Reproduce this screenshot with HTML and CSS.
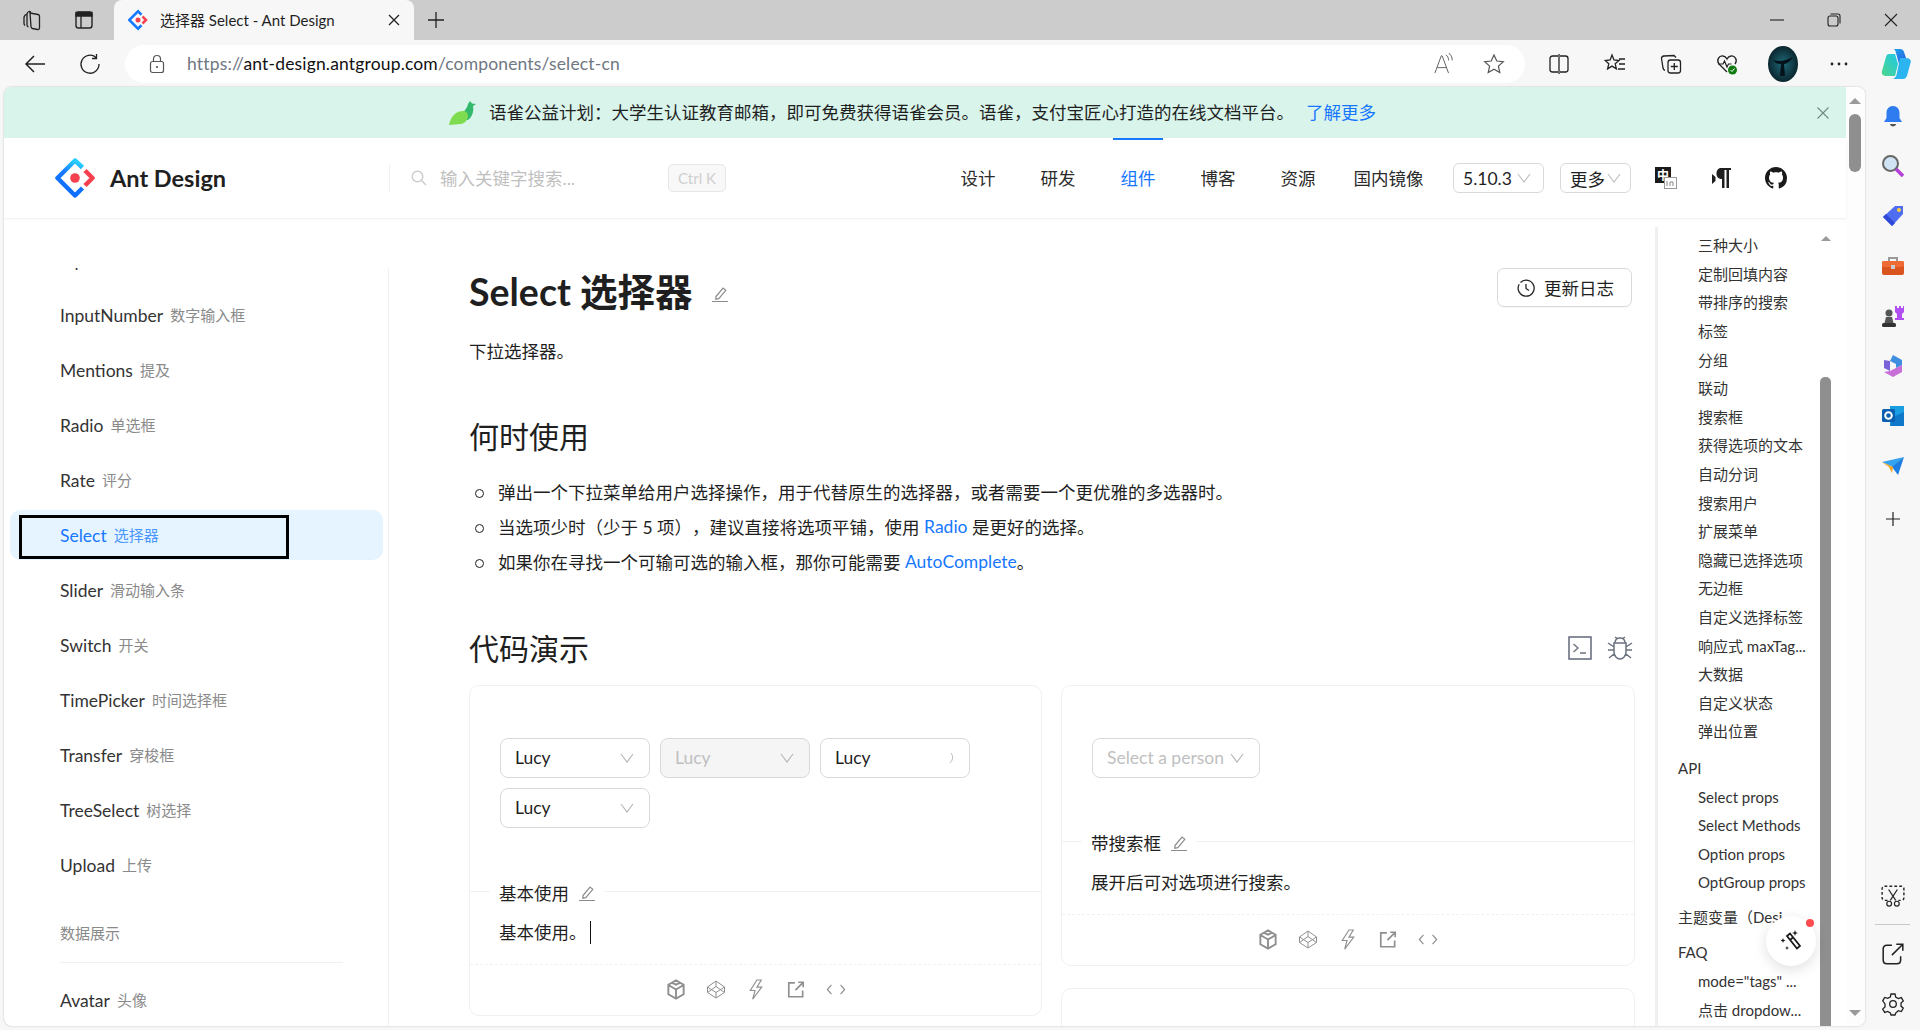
FILE: index.html
```html
<!DOCTYPE html>
<html lang="zh-CN">
<head>
<meta charset="utf-8">
<title>选择器 Select - Ant Design</title>
<link rel="stylesheet" href="styles.css">
</head>
<body>
<svg class="defs" aria-hidden="true">
  <defs>
    <symbol id="chev" viewBox="0 0 14 10"><path d="M1 1l6 8 6-8" fill="none" stroke="currentColor" stroke-width="1.100"/></symbol>
    <symbol id="edit" viewBox="0 0 18 18"><path d="M5 11.500L12 3l2.800 2.400-7 8.200-3 .6zM1 16.500h16" fill="none" stroke="currentColor" stroke-width="1.200"/></symbol>
    <symbol id="csb" viewBox="0 0 20 22"><path d="M10 1.500l8 4.500v10l-8 4.500-8-4.500V6zM2.500 6.500L10 11l7.500-4.500M10 11v9M6 4l4 2 4-2" fill="none" stroke="currentColor" stroke-width="2"/></symbol>
    <symbol id="cpen" viewBox="0 0 20 20"><path d="M10 1.500l8.500 6v5.500L10 18.500 1.500 13V7.500zM10 1.500V7M10 13v5.500M1.500 7.500L10 13l8.500-5.500M1.500 13L10 7l8.500 6" fill="none" stroke="currentColor" stroke-width="1"/></symbol>
    <symbol id="bolt" viewBox="0 0 16 22"><path d="M9 1L2 12h5l-2.500 9L14 8.500H9L13.500 1z" fill="none" stroke="currentColor" stroke-width="1.200"/></symbol>
    <symbol id="ext" viewBox="0 0 18 18"><path d="M8 3H2.500v12.500H15V10M8.500 9.500L15 3M11 2.500h4.500V7" fill="none" stroke="currentColor" stroke-width="1.500"/></symbol>
    <symbol id="code" viewBox="0 0 22 14"><path d="M6 2L1.500 7 6 12M16 2l4.500 5L16 12" fill="none" stroke="currentColor" stroke-width="1.300"/></symbol>
  </defs>
</svg>

<div class="tabstrip">
  <svg class="tb-icon strip-first" viewBox="0 0 22 22"><path d="M9 4l8 1.500c1 .2 1.500 1 1.500 2V19c0 1-1 1.700-2 1.500l-5-1c-1-.2-1.500-1-1.500-2zM10 3L8 2.500C6.500 3 6 4 6 5.500V16c0 1 .5 1.500 1.500 2M6 5C3.500 6 3 7 3 8.500v6c0 1 .5 1.500 1 2" fill="none" stroke="#222" stroke-width="1.300"/></svg>
  <svg class="tb-icon strip-second" viewBox="0 0 22 22"><rect x="3" y="3" width="16" height="16" rx="2.500" fill="none" stroke="#222" stroke-width="1.400"/><path d="M3 3.500h16v3.500H3zM8 7v12" fill="#222" stroke="#222" stroke-width="1.300"/></svg>
  <div class="tab">
    <svg class="tab-fav" viewBox="0 0 40 40"><path d="M27 9.500L20 2.500 2.500 20 20 37.500 27 30.500" fill="none" stroke="#1677ff" stroke-width="5"/><path d="M29 13l7 7-7 7" fill="none" stroke="#f5414f" stroke-width="5"/><ellipse cx="20" cy="20" rx="5" ry="5" fill="#f5414f"/></svg>
    <span class="tab-title">选择器 Select - Ant Design</span>
    <svg class="tab-close" viewBox="0 0 12 12"><path d="M1 1l10 10M11 1L1 11" stroke="#222" stroke-width="1.300"/></svg>
  </div>
  <svg class="tab-new" viewBox="0 0 18 18"><path d="M9 1v16M1 9h16" stroke="#222" stroke-width="1.300"/></svg>
  <div class="win-controls">
    <svg viewBox="0 0 14 14"><path d="M0 7h14" stroke="#222" stroke-width="1.100"/></svg>
    <svg viewBox="0 0 14 14"><rect x="1" y="3" width="10" height="10" rx="2" fill="none" stroke="#222" stroke-width="1.100"/><path d="M3.500 1H11c1.200 0 2 .8 2 2v7.500" fill="none" stroke="#222" stroke-width="1.100"/></svg>
    <svg viewBox="0 0 14 14"><path d="M1 1l12 12M13 1L1 13" stroke="#222" stroke-width="1.100"/></svg>
  </div>
</div>

<div class="toolbar">
  <svg class="tool tool-back" viewBox="0 0 22 22"><path d="M21 11H2M10 3l-8 8 8 8" fill="none" stroke="#222" stroke-width="1.500"/></svg>
  <svg class="tool tool-reload" viewBox="0 0 22 22"><path d="M17 4.500A9 9 0 1 0 20 11M17.500 1v4.500H13" fill="none" stroke="#222" stroke-width="1.300"/></svg>
  <div class="addressbar">
    <svg class="lock" viewBox="0 0 16 20"><rect x="1.500" y="7.500" width="13" height="11" rx="2" fill="none" stroke="#555" stroke-width="1.200"/><path d="M4.500 7.500V5a3.500 3.500 0 0 1 7 0v2.500" fill="none" stroke="#555" stroke-width="1.200"/><circle cx="8" cy="13" r="1.100" fill="#555"/></svg>
    <div class="url"><span class="url-dim">https://</span>ant-design.antgroup.com<span class="url-dim">/components/select-cn</span></div>
    <svg class="addr-aloud" viewBox="0 0 22 24"><path d="M1 22L8 3h1l7 19M3.500 16h10" fill="none" stroke="#666" stroke-width="1.100"/><path d="M13 2c2 1 3 3 3 6M16 0c2.500 1.500 4 4 4 8" fill="none" stroke="#666" stroke-width="1.100"/></svg>
    <svg class="addr-star" viewBox="0 0 22 22"><path d="M11 2l2.800 6 6.500.7-4.900 4.400 1.400 6.500L11 16.300l-5.800 3.300 1.400-6.500L1.700 8.700 8.200 8z" fill="none" stroke="#555" stroke-width="1.200"/></svg>
  </div>
  <div class="tool-right">
    <svg class="tool" viewBox="0 0 22 22"><path d="M10 3H4.500C3.100 3 2 4.100 2 5.500v11C2 17.900 3.100 19 4.500 19H10M12 3h5.500C18.900 3 20 4.100 20 5.500v11c0 1.400-1.100 2.500-2.500 2.500H12M11 1v20" fill="none" stroke="#222" stroke-width="1.300"/></svg>
    <svg class="tool" viewBox="0 0 22 22"><path d="M8 2l2 5 5 .5-3.800 3.300 1.200 5-4.400-2.700-4.400 2.700 1.200-5L1.200 7.500l5-.5zM15 6h6M15 11h6M14 16h7" fill="none" stroke="#222" stroke-width="1.300"/></svg>
    <svg class="tool" viewBox="0 0 22 22"><rect x="8" y="7" width="12.500" height="13" rx="2.500" fill="none" stroke="#222" stroke-width="1.300"/><path d="M14.300 10v7M10.800 13.500h7M16 4.500L14 2.500 4 3c-1.500.2-2.500 1-2.500 2.500L3 15c.2 1 1 2 2 2.500" fill="none" stroke="#222" stroke-width="1.300"/></svg>
    <svg class="tool" viewBox="0 0 22 22"><path d="M11 19L3 11C0 7 3 2.500 7 3c2 .2 3.200 1.500 4 3 .8-1.500 2-2.800 4-3 4-.5 7 4 4 8" fill="none" stroke="#222" stroke-width="1.300"/><path d="M2 11h5l1.500-3 2.500 6 1.500-3h3" fill="none" stroke="#222" stroke-width="1.200"/><circle cx="16.500" cy="17" r="4.500" fill="#107c10"/><path d="M14.500 17l1.500 1.500 2.500-3" fill="none" stroke="#fff" stroke-width="1"/></svg>
    <svg class="avatar" viewBox="0 0 30 36"><defs><radialGradient id="av" cx=".5" cy=".5" r=".6"><stop offset="0" stop-color="#1f6a78"/><stop offset="1" stop-color="#061820"/></radialGradient></defs><ellipse cx="15" cy="18" rx="15" ry="18" fill="url(#av)"/><path d="M5 14c6 2 12 1 20-3-3 5-7 7-9 7l1 12h-5l1-12c-3 0-6-1-8-4z" fill="#04121a"/></svg>
    <svg class="tool" viewBox="0 0 22 22"><circle cx="4" cy="11" r="1.400" fill="#222"/><circle cx="11" cy="11" r="1.400" fill="#222"/><circle cx="18" cy="11" r="1.400" fill="#222"/></svg>
    <svg class="copilot" viewBox="0 0 30 32"><defs><linearGradient id="cp1" x1="0" y1="0" x2="1" y2="1"><stop offset="0" stop-color="#1aa7ec"/><stop offset="1" stop-color="#2f4fe0"/></linearGradient><linearGradient id="cp2" x1="0" y1="1" x2="1" y2="0"><stop offset="0" stop-color="#4fd68a"/><stop offset="1" stop-color="#1ec8e8"/></linearGradient></defs><path d="M12 1h7c2 0 3.500 1 4 3L27 16H18L15 5c-.5-2.500-1.500-4-3-4z" fill="url(#cp1)"/><path d="M8 6h6l3 10-3 12H6c-4 0-6-2-5-5L5 9c.5-2 1.500-3 3-3z" fill="url(#cp2)"/><path d="M19 10h6c4 0 5.500 2 4.500 5l-3 11c-.5 3-2 5-5 5H11c2 0 3.500-1.500 4.500-4z" fill="#2cb4f0"/></svg>
  </div>
</div>

<div class="viewport">
  <div class="window">
    <div class="page">
      <div class="banner">
        <svg class="bird" viewBox="0 0 28 24"><path d="M21 0l2 2.500 4 .5-3 2c1 6-1 11-5 14l-10-2C12 14 18 8 19 3z" fill="#34b86b"/><path d="M0 24c2-9 7-14 14-14 3 0 5 2 5 5 0 4-3 7-7 8z" fill="#7fdc4e"/></svg>
        <span class="banner-text">语雀公益计划：大学生认证教育邮箱，即可免费获得语雀会员。语雀，支付宝匠心打造的在线文档平台。</span>
        <a class="banner-link">了解更多</a>
        <svg class="banner-close" viewBox="0 0 12 12"><path d="M.5.5l11 11M11.500.5l-11 11" stroke="#6f8a82" stroke-width="1.100"/></svg>
      </div>

      <header class="header">
        <div class="brand">
          <svg class="logo" viewBox="0 0 40 40"><defs><linearGradient id="lg" x1=".6" y1="0" x2=".3" y2="1"><stop offset="0" stop-color="#29cdff"/><stop offset=".4" stop-color="#1677ff"/><stop offset="1" stop-color="#0a6cff"/></linearGradient></defs><path d="M27.500 9.500L20 2.500 2.500 20 20 37.500 27.500 30" fill="none" stroke="url(#lg)" stroke-width="4.500" stroke-linejoin="round"/><path d="M30 12.500l7.500 7.500-7.500 7.500" fill="none" stroke="#f5414f" stroke-width="4.500" stroke-linejoin="round"/><ellipse cx="20" cy="20" rx="4.800" ry="4.800" fill="#f5414f"/></svg>
          <span class="brand-name">Ant Design</span>
        </div>
        <div class="search">
          <svg class="search-ico" viewBox="0 0 16 16"><circle cx="6.500" cy="6.500" r="5.300" fill="none" stroke="#ccc" stroke-width="1.400"/><path d="M10.500 10.500L15 15" stroke="#ccc" stroke-width="1.400"/></svg>
          <span class="search-ph">输入关键字搜索...</span>
          <kbd class="kbd">Ctrl K</kbd>
        </div>
        <nav class="nav">
          <a class="nav-item">设计</a>
          <a class="nav-item">研发</a>
          <a class="nav-item nav-active">组件</a>
          <a class="nav-item">博客</a>
          <a class="nav-item">资源</a>
          <a class="nav-item nav-wide">国内镜像</a>
        </nav>
        <div class="hbtn hbtn-ver"><span>5.10.3</span><svg class="hchev"><use href="#chev"/></svg></div>
        <div class="hbtn hbtn-more"><span>更多</span><svg class="hchev"><use href="#chev"/></svg></div>
        <svg class="hicon hicon-lang" viewBox="0 0 22 22"><rect x="0" y="0" width="16" height="16" fill="#1a1a1a"/><text x="8" y="12.500" class="lang-text">中</text><rect x="9.500" y="10.500" width="12" height="11" fill="#fff" stroke="#999"/><path d="M12 19v-5M15 19v-4h3v4" fill="none" stroke="#888"/></svg>
        <svg class="hicon hicon-rtl" viewBox="0 0 20 22"><path d="M9 1h10v2h-2v18h-2.500V3h-2v18H10v-9c-4 0-5.500-2.500-5.500-5.500S6 1 9 1zM0 7l3.500 3v4L0 17z" fill="#1f1f1f" fill-rule="evenodd"/></svg>
        <svg class="hicon hicon-gh" viewBox="0 0 16 16"><path fill="#1a1a1a" d="M8 0C3.580 0 0 3.580 0 8c0 3.540 2.290 6.530 5.470 7.590.4.070.55-.17.55-.38 0-.19-.01-.82-.01-1.490-2.010.37-2.530-.49-2.690-.94-.09-.23-.48-.94-.82-1.130-.28-.15-.68-.52-.01-.53.63-.01 1.080.58 1.230.82.72 1.210 1.870.87 2.330.66.07-.52.28-.87.51-1.070-1.780-.2-3.640-.89-3.640-3.950 0-.87.31-1.590.82-2.150-.08-.2-.36-1.020.08-2.120 0 0 .67-.21 2.200.82.64-.18 1.320-.27 2-.27.68 0 1.360.09 2 .27 1.530-1.040 2.200-.82 2.200-.82.44 1.100.16 1.920.08 2.120.51.56.82 1.270.82 2.150 0 3.070-1.870 3.750-3.650 3.950.29.25.54.73.54 1.480 0 1.070-.01 1.930-.01 2.200 0 .21.15.46.55.38A8.013 8.013 0 0016 8c0-4.420-3.580-8-8-8z"/></svg>
      </header>

      <div class="content">
        <aside class="sider">
          <div class="sider-clip">
            <ul class="menu">
              <li class="mi"><a>Input</a></li>
              <li class="mi"><a>InputNumber<small>数字输入框</small></a></li>
              <li class="mi"><a>Mentions<small>提及</small></a></li>
              <li class="mi"><a>Radio<small>单选框</small></a></li>
              <li class="mi"><a>Rate<small>评分</small></a></li>
              <li class="mi mi-active"><a>Select<small>选择器</small></a></li>
              <li class="mi"><a>Slider<small>滑动输入条</small></a></li>
              <li class="mi"><a>Switch<small>开关</small></a></li>
              <li class="mi"><a>TimePicker<small>时间选择框</small></a></li>
              <li class="mi"><a>Transfer<small>穿梭框</small></a></li>
              <li class="mi"><a>TreeSelect<small>树选择</small></a></li>
              <li class="mi"><a>Upload<small>上传</small></a></li>
              <li class="mgroup">数据展示</li>
              <li class="mdiv"></li>
              <li class="mi"><a>Avatar<small>头像</small></a></li>
            </ul>
          </div>
        </aside>

        <main class="main">
          <div class="title-row">
            <h1 class="h1">Select <b>选择器</b></h1>
            <svg class="h1-edit"><use href="#edit"/></svg>
            <div class="changelog">
              <svg class="clock" viewBox="0 0 18 18"><path d="M3.500 3.500A8 8 0 1 1 2.200 5.200M9 5v4.500l3 2" fill="none" stroke="#222" stroke-width="1.300"/></svg>
              <span>更新日志</span>
            </div>
          </div>
          <p class="lead">下拉选择器。</p>
          <h2 class="h2">何时使用</h2>
          <ul class="bullets">
            <li>弹出一个下拉菜单给用户选择操作，用于代替原生的选择器，或者需要一个更优雅的多选器时。</li>
            <li>当选项少时（少于 5 项），建议直接将选项平铺，使用 <a class="link">Radio</a> 是更好的选择。</li>
            <li>如果你在寻找一个可输可选的输入框，那你可能需要 <a class="link">AutoComplete</a>。</li>
          </ul>
          <div class="demo-head">
            <h2 class="h2 h2-flush">代码演示</h2>
            <svg class="dh-icon" viewBox="0 0 24 24"><rect x="1" y="1" width="22" height="22" fill="none" stroke="#6b7280" stroke-width="1.600"/><path d="M5.500 8l4.500 4-4.500 4M12 17h6" fill="none" stroke="#6b7280" stroke-width="1.400"/></svg>
            <svg class="dh-icon dh-bug" viewBox="0 0 26 26"><path d="M8 8c0-3 2-5 5-5s5 2 5 5zM7 8h12v9c0 4-3 7-6 7s-6-3-6-7zM8 2l3 2M18 2l-3 2M1 8l6 4M25 8l-6 4M1 15h6M25 15h-6M2 23l5-4M24 23l-5-4" fill="none" stroke="#6b7280" stroke-width="1.500"/></svg>
          </div>
          <div class="demos">
            <div class="col">
              <section class="demo">
                <div class="demo-body selects">
                  <div class="sel"><span>Lucy</span><svg class="chev"><use href="#chev"/></svg></div>
                  <div class="sel sel-disabled"><span>Lucy</span><svg class="chev"><use href="#chev"/></svg></div>
                  <div class="sel"><span>Lucy</span><svg class="spin" viewBox="0 0 14 14"><path d="M9 2c2.500 3 2 7-1 10" fill="none" stroke="#bbb" stroke-width="1"/></svg></div>
                  <div class="sel"><span>Lucy</span><svg class="chev"><use href="#chev"/></svg></div>
                </div>
                <div class="demo-meta">
                  <div class="demo-title">基本使用<svg class="t-edit"><use href="#edit"/></svg></div>
                  <p class="demo-desc">基本使用。<i class="caret"></i></p>
                </div>
                <div class="demo-actions">
                  <svg class="a-ic"><use href="#csb"/></svg>
                  <svg class="a-ic"><use href="#cpen"/></svg>
                  <svg class="a-ic"><use href="#bolt"/></svg>
                  <svg class="a-ic"><use href="#ext"/></svg>
                  <svg class="a-ic"><use href="#code"/></svg>
                </div>
              </section>
            </div>
            <div class="col">
              <section class="demo">
                <div class="demo-body selects">
                  <div class="sel sel-ph"><span>Select a person</span><svg class="chev"><use href="#chev"/></svg></div>
                </div>
                <div class="demo-meta">
                  <div class="demo-title">带搜索框<svg class="t-edit"><use href="#edit"/></svg></div>
                  <p class="demo-desc">展开后可对选项进行搜索。</p>
                </div>
                <div class="demo-actions">
                  <svg class="a-ic"><use href="#csb"/></svg>
                  <svg class="a-ic"><use href="#cpen"/></svg>
                  <svg class="a-ic"><use href="#bolt"/></svg>
                  <svg class="a-ic"><use href="#ext"/></svg>
                  <svg class="a-ic"><use href="#code"/></svg>
                </div>
              </section>
              <section class="demo demo-next"></section>
            </div>
          </div>
        </main>

        <aside class="anchor">
          <ul class="toc">
            <li class="toc-sub">三种大小</li>
            <li class="toc-sub">定制回填内容</li>
            <li class="toc-sub">带排序的搜索</li>
            <li class="toc-sub">标签</li>
            <li class="toc-sub">分组</li>
            <li class="toc-sub">联动</li>
            <li class="toc-sub">搜索框</li>
            <li class="toc-sub">获得选项的文本</li>
            <li class="toc-sub">自动分词</li>
            <li class="toc-sub">搜索用户</li>
            <li class="toc-sub">扩展菜单</li>
            <li class="toc-sub">隐藏已选择选项</li>
            <li class="toc-sub">无边框</li>
            <li class="toc-sub">自定义选择标签</li>
            <li class="toc-sub">响应式 maxTag...</li>
            <li class="toc-sub">大数据</li>
            <li class="toc-sub">自定义状态</li>
            <li class="toc-sub">弹出位置</li>
            <li class="toc-top toc-api">API</li>
            <li class="toc-sub">Select props</li>
            <li class="toc-sub">Select Methods</li>
            <li class="toc-sub">Option props</li>
            <li class="toc-sub">OptGroup props</li>
            <li class="toc-top">主题变量（Desi...</li>
            <li class="toc-top">FAQ</li>
            <li class="toc-sub toc-gap">mode="tags" ...</li>
            <li class="toc-sub">点击 dropdow...</li>
          </ul>
          <div class="toc-bar">
            <i class="arrow-up"></i>
            <i class="toc-thumb"></i>
          </div>
          <div class="fab">
            <i class="fab-dot"></i>
            <svg viewBox="0 0 24 24" class="fab-ico"><path d="M8 7l3-2.500 10 12.500-3 2.500zM11 11l3-2.500" fill="none" stroke="#1a1a1a" stroke-width="1.700"/><path d="M16 1l.8 2.200L19 4l-2.200.8L16 7l-.8-2.200L13 4l2.200-.8zM4 9l.7 1.800 1.800.7-1.800.7L4 14l-.7-1.800-1.800-.7 1.800-.7zM8 17l.6 1.400 1.400.6-1.400.6L8 21l-.6-1.400L6 19l1.400-.6z" fill="#1a1a1a"/></svg>
          </div>
        </aside>
      </div>
    </div>
    <div class="page-bar">
      <i class="arrow-up"></i>
      <i class="page-thumb"></i>
      <i class="arrow-down"></i>
    </div>
  </div>

  <div class="edge">
    <svg class="edge-ic" viewBox="0 0 24 24"><path d="M12 2c4 0 6.500 3 6.500 7v5l2.500 4H3l2.500-4V9C5.500 5 8 2 12 2z" fill="#2f7bf0"/><path d="M9 20h6c0 1.500-1.500 2.500-3 2.500S9 21.500 9 20z" fill="#555"/></svg>
    <svg class="edge-ic" viewBox="0 0 24 24"><circle cx="9.500" cy="9.500" r="7.500" fill="#cfe3f5" stroke="#666" stroke-width="2"/><path d="M15 15l7 7" stroke="#b23fd6" stroke-width="3.500"/></svg>
    <svg class="edge-ic" viewBox="0 0 24 24"><path d="M14 2h8v8L11 22 2 13z" fill="#4f6df0"/><path d="M2 13l9 9 3-3-9-9z" fill="#2f48d8"/><circle cx="18" cy="6" r="2" fill="#ffd23f"/></svg>
    <svg class="edge-ic" viewBox="0 0 24 24"><rect x="1" y="7" width="22" height="14" rx="2" fill="#d9541e"/><path d="M8 7V4h8v3" fill="none" stroke="#999" stroke-width="2"/><rect x="1" y="7" width="22" height="6" rx="2" fill="#ee6c33"/><rect x="10" y="11" width="4" height="4" fill="#ccc"/></svg>
    <svg class="edge-ic" viewBox="0 0 24 24"><circle cx="8" cy="9" r="3.500" fill="#555"/><path d="M5 13h6l1.500 6H3.500z" fill="#555"/><rect x="1" y="19" width="14" height="4" rx="1.500" fill="#333"/><path d="M14 2h2v2h2V2h2v2h2V2h1v6l-2 2v4h2v2h-9v-2h2v-4l-2-2z" fill="#b04ff0"/></svg>
    <svg class="edge-ic" viewBox="0 0 24 24"><path d="M12 1l9 5v5l-6 3V10l-6-3z" fill="#3f8fe0"/><path d="M3 6l6 1v10l-6-3z" fill="#7a62d8"/><path d="M21 11v7l-9 5-9-5 6-1 6-3z" fill="#c86ed8"/></svg>
    <svg class="edge-ic" viewBox="0 0 24 24"><path d="M9 2h14v19H9z" fill="#1b9de2"/><path d="M12 13l11-5v14H9z" fill="#0f78c8"/><rect x="1" y="5" width="13" height="13" rx="1.500" fill="#0a5fb0"/><circle cx="7.500" cy="11.500" r="3.300" fill="none" stroke="#fff" stroke-width="2"/></svg>
    <svg class="edge-ic" viewBox="0 0 24 24"><path d="M1 8L23 3 12 13z" fill="#36a3f0"/><path d="M23 3L17 21l-6-8z" fill="#1d7de0"/><path d="M1 8l11 5-1 6-3-6z" fill="#f4a41c"/></svg>
    <svg class="edge-plus" viewBox="0 0 16 16"><path d="M8 1v14M1 8h14" stroke="#222" stroke-width="1.200"/></svg>
    <div class="edge-spacer"></div>
    <svg class="edge-ic edge-shot" viewBox="0 0 22 22"><path d="M6 15H3.500C2 15 1 14 1 12.500v-8C1 3 2 2 3.500 2h15C20 2 21 3 21 4.500v8c0 1.500-1 2.500-2.500 2.500H16" fill="none" stroke="#222" stroke-width="1.300" stroke-dasharray="2.500 2"/><path d="M7 5l6.500 10M15 5L8.500 15" stroke="#222" stroke-width="1.100"/><circle cx="7.500" cy="18" r="2.200" fill="none" stroke="#222" stroke-width="1.100"/><circle cx="14.500" cy="18" r="2.200" fill="none" stroke="#222" stroke-width="1.100"/></svg>
    <i class="edge-div"></i>
    <svg class="edge-ic edge-share" viewBox="0 0 22 22"><path d="M10 3H5.500C3.500 3 2 4.500 2 6.500v10C2 18.500 3.500 20 5.500 20h9c2 0 3.500-1.500 3.500-3.500V13M10 12L20 2M14 2h6v6" fill="none" stroke="#222" stroke-width="1.400"/></svg>
    <svg class="edge-ic edge-gear" viewBox="0 0 24 24"><circle cx="12" cy="12" r="3.300" fill="none" stroke="#222" stroke-width="1.300"/><path d="M10 2h4l.7 3 2.600 1.500 3-.9 2 3.400-2.300 2.100v3l2.300 2.100-2 3.400-3-.9L14.700 21l-.7 2h-4l-.7-2-2.600-1.500-3 .9-2-3.400 2.300-2.100v-3L1.700 8.800l2-3.400 3 .9L9.300 5z" fill="none" stroke="#222" stroke-width="1.300"/></svg>
  </div>
</div>
</body>
</html>
```

FILE: styles.css
```css
* { box-sizing: border-box; }
html, body { margin: 0; height: 100%; overflow: hidden; }
body {
  width: 1920px;
  height: 1030px;
  background: #f7f7f7;
  color: #1f1f1f;
  font-family: "Lato", "Noto Sans CJK SC", sans-serif;
  font-size: 17.5px;
  text-spacing-trim: space-all;
  display: flex;
  flex-direction: column;
}
a { color: inherit; text-decoration: none; }
ul { list-style: none; margin: 0; padding: 0; }
p, h1, h2 { margin: 0; }
i { display: block; font-style: normal; }
svg { display: block; flex: none; }
.defs { position: absolute; width: 0; height: 0; }

/* browser tab strip */
.tabstrip { height: 40px; flex: none; background: #cccccc; display: flex; align-items: center; }
.tb-icon { width: 22px; height: 22px; }
.strip-first { margin-left: 21px; }
.strip-second { margin-left: 30px; }
.tab {
  margin-left: 19px; width: 300px; height: 40px; background: #f7f7f7;
  border-radius: 8px 8px 0 0; display: flex; align-items: center;
}
.tab-fav { width: 20px; height: 24px; margin-left: 14px; }
.tab-title { margin-left: 12px; margin-bottom: 2px; font-size: 15px; flex: 1; white-space: nowrap; }
.tab-close { width: 12px; height: 12px; margin-right: 14px; }
.tab-new { width: 18px; height: 18px; margin-left: 13px; }
.win-controls { margin-left: auto; display: flex; gap: 43px; margin-right: 22px; }
.win-controls svg { width: 14px; height: 14px; }

/* browser toolbar */
.toolbar { height: 47px; flex: none; background: #f7f7f7; display: flex; align-items: center; }
.tool { width: 22px; height: 22px; }
.tool-back { margin-left: 24px; }
.tool-reload { margin-left: 33px; }
.addressbar {
  margin-left: 24px; width: 1400px; height: 38px; margin-top: 1px; background: #fff; border-radius: 19px;
  display: flex; align-items: center;
}
.lock { width: 16px; height: 20px; margin-left: 24px; }
.url { margin-left: 22px; margin-bottom: 2px; font-size: 17.5px; letter-spacing: .16px; color: #111; white-space: nowrap; flex: 1; }
.url-dim { color: #6f7782; }
.addr-aloud { width: 20px; height: 22px; }
.addr-star { width: 22px; height: 22px; margin-left: 29px; margin-right: 20px; }
.tool-right { display: flex; align-items: center; margin-left: 23px; gap: 34px; }
.avatar { width: 30px; height: 36px; margin: 0 -4px; }
.copilot { width: 30px; height: 32px; margin-left: -3px; }

/* viewport */
.viewport { flex: 1; display: flex; min-height: 0; padding: 0 0 4px 4px; }
.window {
  width: 1861px; background: #fff; border-radius: 8px; display: flex; overflow: hidden;
  box-shadow: 0 0 2px rgba(0,0,0,.25);
}
.page { width: 1842px; display: flex; flex-direction: column; min-height: 0; }
.page-bar { flex: 1; background: #fdfdfd; display: flex; flex-direction: column; align-items: center; padding-top: 11px; padding-bottom: 10px; padding-right: 2px; }
.page-thumb { width: 12px; height: 58px; background: #8f8f8f; border-radius: 6px; margin-top: 10px; }
.arrow-up { width: 0; height: 0; border: 6px solid transparent; border-top: 0; border-bottom: 6px solid #9a9a9a; }
.arrow-down { width: 0; height: 0; border: 6px solid transparent; border-bottom: 0; border-top: 6px solid #9a9a9a; margin-top: auto; }

/* banner */
.banner { height: 51px; flex: none; background: #d9f4eb; display: flex; align-items: center; padding-left: 445px; }
.bird { width: 28px; height: 24px; }
.banner-text { margin-left: 12px; margin-bottom: 2px; white-space: nowrap; }
.banner-link { margin-left: 12px; margin-bottom: 2px; color: #1677ff; white-space: nowrap; }
.banner-close { width: 12px; height: 12px; margin-left: auto; margin-right: 17px; }

/* header */
.header { height: 80px; flex: none; display: flex; align-items: center; box-shadow: 0 1px 2px rgba(0,0,0,.07); position: relative; z-index: 2; background: #fff; }
.brand { width: 385px; display: flex; align-items: center; padding-left: 51px; }
.logo { width: 40px; height: 40px; }
.brand-name { margin-left: 15px; font-size: 23.5px; font-weight: 700; white-space: nowrap; }
.search { width: 337px; height: 29px; display: flex; align-items: center; border-left: 1px solid #f0f0f0; padding-left: 21px; }
.search-ico { width: 16px; height: 16px; }
.search-ph { margin-left: 13px; margin-bottom: 2px; color: #bfbfbf; flex: 1; white-space: nowrap; }
.kbd { width: 58px; height: 28px; background: #f8f8f8; border: 1px solid #e6e6e6; border-radius: 5px; color: #cfcfcf; font: inherit; font-size: 15px; display: flex; align-items: center; justify-content: center; }
.nav { margin-left: 212px; display: flex; align-self: stretch; }
.nav-item { width: 50px; margin: 0 15px; padding-bottom: 4px; border-top: 2px solid transparent; display: flex; align-items: center; justify-content: center; white-space: nowrap; color: #2b2b2b; }
.nav-wide { width: 71px; margin-right: 29px; }
.nav-active { color: #1677ff; border-top-color: #1677ff; }
.hbtn { height: 30px; border: 1px solid #d9d9d9; border-radius: 6px; display: flex; align-items: center; padding-left: 9px; }
.hbtn-ver { width: 91px; }
.hbtn-more { width: 71px; margin-left: 16px; }
.hchev { width: 14px; height: 10px; color: #bdbdbd; margin-left: 5px; }
.hbtn-more .hchev { margin-left: 2px; }
.hicon { height: 22px; }
.hicon-lang { width: 22px; margin-left: 24px; }
.lang-text { fill: #fff; font-size: 12px; text-anchor: middle; font-weight: 700; }
.hicon-rtl { width: 20px; margin-left: 35px; }
.hicon-gh { width: 22px; margin-left: 33px; }

/* page body */
.content { flex: 1; min-height: 0; display: flex; overflow: hidden; }

/* left menu */
.sider { width: 385px; flex: none; padding-top: 50px; }
.sider-clip { height: 100%; overflow: hidden; border-right: 1px solid #f0f0f0; }
.menu { margin-top: -33px; }
.mi { height: 50px; margin: 0 5px 5px 6px; display: flex; align-items: center; padding-left: 50px; border-radius: 10px; white-space: nowrap; color: #333; }
.mi a { display: flex; align-items: center; }
.mi small { font-size: 15px; color: #8a8a8a; margin: 0 0 2px 7px; }
.mi-active { background: #e6f4ff; padding-left: 9px; }
.mi-active a { width: 270px; height: 44px; border: 3px solid #000; margin-top: 4px; padding: 0 0 4px 38px; color: #1677ff; }
.mi-active small { color: #4a97ff; }
.mgroup { height: 38px; margin-top: 23px; padding-left: 56px; color: #8a8a8a; font-size: 15px; display: flex; align-items: center; }
.mdiv { height: 1px; background: #f0f0f0; margin: 11px 45px 12px 56px; }

/* main */
.main { width: 1266px; flex: none; padding: 49px 20px 0 80px; overflow: hidden; }
.title-row { display: flex; align-items: flex-start; height: 50px; }
.h1 { font-size: 37.5px; line-height: 50px; font-weight: 700; white-space: nowrap; }
.h1 b { font-weight: 700; }
.h1-edit { width: 18px; height: 18px; margin: 18px 0 0 18px; color: #8c8c8c; }
.changelog { margin-left: auto; margin-top: 1px; margin-right: 3px; width: 135px; height: 39px; border: 1px solid #d9d9d9; border-radius: 7px; box-shadow: 0 1px 1px rgba(0,0,0,.03); display: flex; align-items: center; padding-left: 19px; gap: 9px; }
.clock { width: 18px; height: 18px; }
.lead { margin-top: 20px; line-height: 30px; }
.h2 { margin-top: 47px; font-size: 30px; line-height: 44px; font-weight: 400; }
.h2-flush { margin-top: 0; }
.bullets { margin-top: 15.5px; }
.bullets li { height: 35.2px; display: flex; align-items: center; padding-left: 29px; position: relative; white-space: pre-wrap; }
.bullets li::before { content: ""; position: absolute; left: 6px; top: 15px; width: 7px; height: 7px; border: 1px solid #1f1f1f; border-radius: 50%; }
.link { color: #1677ff; }
.demo-head { margin-top: 46.5px; height: 44px; display: flex; align-items: center; gap: 15px; padding-right: 2px; }
.demo-head .h2 { margin-right: auto; }
.dh-icon { width: 24px; height: 24px; }
.dh-bug { width: 26px; height: 26px; }
.demos { margin-top: 15px; display: grid; grid-template-columns: 573px 1fr; gap: 19px; }
.col { display: flex; flex-direction: column; gap: 22px; }
.demo { border: 1px solid #f0f0f0; border-radius: 10px; background: #fff; }
.demo-next { height: 60px; }
.demo-body { padding: 52px 30px 63px; }
.selects { display: flex; flex-wrap: wrap; gap: 10px; }
.sel { width: 150px; height: 40px; border: 1px solid #d9d9d9; border-radius: 8px; display: flex; align-items: center; justify-content: space-between; padding: 0 15px 0 14px; white-space: nowrap; }
.sel-disabled { background: #f5f5f5; color: #bfbfbf; }
.sel-ph { width: 168px; color: #bfbfbf; }
.chev { width: 14px; height: 10px; color: #b4b4b4; }
.spin { width: 14px; height: 14px; margin-right: -2px; }
.demo-meta { position: relative; border-top: 1px solid #f0f0f0; height: 73px; padding-top: 29px; }
.demo-title { position: absolute; left: 20px; top: -11px; background: #fff; padding: 0 9px; height: 24px; display: flex; align-items: center; gap: 9px; }
.t-edit { width: 18px; height: 18px; color: #8c8c8c; }
.demo-desc { padding-left: 29px; line-height: 24px; display: flex; align-items: center; }
.caret { width: 1px; height: 23px; background: #111; margin-left: 3px; }
.demo-actions { border-top: 1px dashed #f0f0f0; height: 51px; display: flex; align-items: center; justify-content: center; gap: 20px; }
.a-ic { width: 20px; height: 21px; color: #8f8f8f; }

/* right toc */
.anchor { flex: 1; min-width: 0; position: relative; display: flex; margin-top: 9px; border-left: 3px solid #f0f0f0; }
.toc { width: 162px; padding-top: 3.5px; font-size: 15px; color: #333; flex: none; }
.toc li { height: 28.6px; display: flex; align-items: center; white-space: nowrap; overflow: hidden; }
.toc-sub { padding-left: 40px; }
.toc-top { padding-left: 20px; margin-top: 6px; }
.toc .toc-api { margin-top: 8.5px; }
.toc .toc-gap { margin-top: 1px; }
.toc-bar { width: 11px; display: flex; flex-direction: column; align-items: center; padding-top: 9px; }
.toc-bar .arrow-up { border-width: 5.5px; border-top: 0; }
.toc-thumb { width: 11px; flex: 1; background: #8f8f8f; margin-top: 136px; border-radius: 5px 5px 0 0; }
.fab { position: absolute; left: 108px; top: 689px; width: 50px; height: 50px; border-radius: 50%; background: #fff; box-shadow: 0 4px 14px rgba(0,0,0,.12); display: flex; align-items: center; justify-content: center; }
.fab-dot { position: absolute; right: 2px; top: 3px; width: 8px; height: 8px; border-radius: 50%; background: #ff4d4f; }
.fab-ico { width: 24px; height: 24px; }

/* edge sidebar */
.edge { flex: 1; display: flex; flex-direction: column; align-items: center; padding-top: 16.5px; min-width: 0; }
.edge-ic { width: 24px; height: 24px; margin-bottom: 26px; }
.edge-plus { width: 16px; height: 16px; margin-top: 7.5px; }
.edge-spacer { flex: 1; }
.edge-shot { margin-bottom: 16px; }
.edge-div { width: 35px; height: 1px; background: #c8c8c8; margin-bottom: 17px; }
.edge-share { margin-bottom: 26px; }
.edge-gear { margin-bottom: 10px; }
```
